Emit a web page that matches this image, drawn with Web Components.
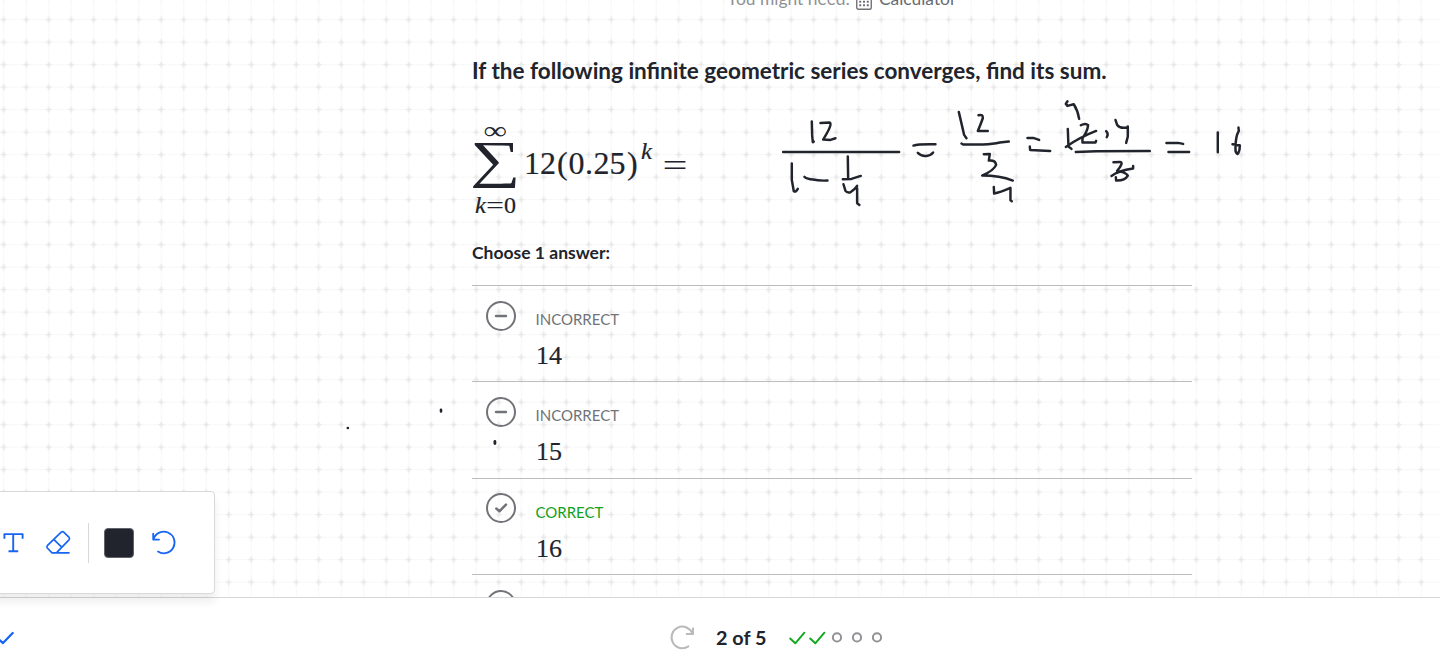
<!DOCTYPE html>
<html lang="en"><head><meta charset="utf-8"><title>Infinite geometric series</title>
<style>html,body{margin:0;height:100%;overflow:hidden;background:#fff}body{font-family:Lato,"Noto Sans",sans-serif;color:#21242c}</style></head>
<body>
<practice-page></practice-page>
<script>
const define=(name,html)=>customElements.define(name,class extends HTMLElement{
  connectedCallback(){ if(!this.shadowRoot){const t=document.createElement('template');t.innerHTML=html;this.attachShadow({mode:'open'}).append(t.content.cloneNode(true));} }
});

define('grid-paper',`<style>:host{position:absolute;inset:0;z-index:0}svg{display:block;width:100%;height:100%}</style>
<svg aria-hidden="true"><defs><pattern id="g" patternUnits="userSpaceOnUse" x="-7.5" y="8.4" width="22.5" height="22.5">
<path d="M11.25 0V22.5M0 11.25H22.5" stroke="#f3f3f3" stroke-width="1.2" stroke-dasharray="1.5 1"/>
<path d="M11.25 8.4V14.1M8.4 11.25H14.1" stroke="#e7e7e7" stroke-width="1.7"/></pattern></defs><rect width="100%" height="100%" fill="url(#g)"/></svg>`);

define('tool-hint',`<style>:host{display:flex;height:20px;align-items:center;color:#8f9196;font-size:17.4px;line-height:20px;white-space:pre;padding-left:255px;margin-top:-11px}
svg{margin:0 7px 0 6px;position:relative;top:2px}.c{color:#6a6c72}</style><span><slot></slot></span><svg width="16" height="18" viewBox="0 0 16 18"><rect x=".75" y=".75" width="14.5" height="16.5" rx="1.5" fill="#fff" stroke="#717378" stroke-width="1.4"/><path d="M3.2 4h9.6M3.2 9.7h9.6M3.2 13.3h9.6" stroke="#717378" stroke-width="2" stroke-dasharray="2 1.8"/></svg><span class="c"><slot name="tool"></slot></span>`);

define('series-formula',`<style>:host{display:block;margin-top:32px;height:104px}svg{display:block;overflow:visible}text{font-family:"Liberation Serif",serif;fill:#21242c}.i{font-style:italic}.b{stroke:#21242c;stroke-width:.2px}</style>
<svg width="230" height="104" viewBox="472 117 230 104">
<text x="483.4" y="139.2" font-size="25" textLength="23.5" lengthAdjust="spacingAndGlyphs">∞</text>
<text transform="translate(470 177.3) scale(1.63 1.62)" font-size="32" textLength="31" lengthAdjust="spacingAndGlyphs">∑</text>
<text class="i b" x="475" y="213" font-size="22.5" textLength="11" lengthAdjust="spacingAndGlyphs">k</text>
<text x="486" y="213" font-size="23" textLength="18" lengthAdjust="spacingAndGlyphs">=</text>
<text class="b" x="504" y="213" font-size="23" textLength="12" lengthAdjust="spacingAndGlyphs">0</text>
<text class="b" y="174" x="524 540 557 568.5 585 593.5 609.5 627" font-size="32">12(0.25)</text>
<text class="i b" x="641" y="159" font-size="22.5" textLength="11" lengthAdjust="spacingAndGlyphs">k</text>
<text x="662.5" y="176" font-size="32" textLength="25" lengthAdjust="spacingAndGlyphs">=</text></svg>`);

define('status-ring',`<style>:host{display:block;width:30px;height:30px}svg{display:block}.check,:host([correct]) .minus{display:none}:host([correct]) .check{display:inline}</style>
<svg width="30" height="30" fill="none" stroke="#717378" stroke-width="2" stroke-linecap="round" stroke-linejoin="round"><circle cx="15" cy="15" r="14"/><path class="minus" stroke-width="2.4" d="M10 15H20"/><path class="check" stroke-width="2.5" d="M10.3 15.5L13.4 18.3L20 11.6"/></svg>`);

define('answer-choice',`<style>:host{display:flex;box-sizing:border-box;height:96.33px;border-top:1px solid #babcbf;padding:15px 0 0 14px;gap:19.5px}:host([correct]){padding-top:14.6px}
.copy{display:flex;flex-direction:column}.s{font-size:15px;line-height:20px;margin-top:7.7px;color:#717378}:host([correct]) .s{color:#13a01a;margin-top:8.6px}.v{font:26px/30px "Liberation Serif",serif;-webkit-text-stroke:.2px #21242c;margin-top:12px;padding-left:.5px}</style>
<status-ring></status-ring><div class="copy"><span class="s"><slot name="status"></slot></span><span class="v"><slot></slot></span></div>`);

define('ink-layer',`<style>:host{position:absolute;inset:0;z-index:2;pointer-events:none}svg{display:block}</style>
<svg width="1440" height="597" fill="none" stroke="#21242c" stroke-linecap="round" stroke-linejoin="round">
<g transform="translate(769.8 89.9) scale(.33333)" stroke-width="7.4">
<path d="M126 95L127 135L129 157L132 155M152 99L180 98Q189 103 160 149L182 150L197 145"/>
<path d="M40 186H388M66 221V270L72 304Q78 308 84 297M104 261Q112 268 130 269Q145 273 173 272M234 200L235 263M219 268L245 267L273 258"/>
<path d="M221 283L227 303Q232 310 242 307Q256 298 262 288M262 295V340L269 345"/>
<path d="M431 167Q445 162 497 163M444 189Q455 200 470 198Q482 198 490 188"/>
<path d="M567 66L583 135L590 145M626 76Q640 72 639 85Q630 110 624 123H654M575 161L580 164H640Q670 163 690 158L717 155"/>
<path d="M642 193L660 192L657 212Q677 210 679 225Q672 242 637 257Q690 257 729 272M672 291L673 311Q690 308 722 294L722 331L726 334"/></g>
<g transform="translate(999.8 89.9) scale(.33333)" stroke-width="7.4">
<path d="M203 34L198 42L203 48L222 43Q234 62 238 87M204 117L206 170L215 177M198 171Q240 142 289 123M243 106Q257 98 265 106Q263 125 248 145V158H287L289 153"/>
<path d="M319 124Q327 132 321 142M347 90L352 105Q362 118 384 112M384 110V140L379 159M228 186L290 184L450 183"/>
<path d="M341 217L361 216Q373 218 352 243Q378 247 384 257Q375 273 349 272L348 262M335 258Q355 243 400 236V228"/>
<path d="M83 144H100L118 150M90 170L91 180L151 183M500 159H535L550 162M506 186H568M654 128V187M716 113L717 123Q707 140 707 175Q706 188 713 192Q720 187 720 166L698 163"/></g>
<path stroke-width="2.6" d="M347.8 428h.1M441 409.8v1.6"/><path stroke-width="2.8" d="M494.9 441.4v2.2"/></svg>`);

define('tool-palette',`<style>:host{position:absolute;left:-20px;top:491px;z-index:4;width:235px;height:102.5px;box-sizing:border-box;border:1px solid #d8d9db;border-radius:4px;background:#fff;box-shadow:0 8px 8px rgba(33,36,44,.08);display:flex;align-items:center;padding:1px 0 0 19.5px}
svg{display:block}.e{margin-left:19.5px}.d{width:1px;height:40px;background:#d6d8da;margin-left:16px}.sw{width:30px;height:30px;border-radius:4px;background:#21242c;margin-left:15px;box-sizing:border-box;border:1px solid #60636a}.u{margin-left:15.5px}</style>
<svg width="24" height="26" fill="none" stroke="#1865f2" stroke-width="1.9"><path d="M3.4 8.8V4.1H21.6V8.8M12.2 4V21.3M7.5 21.3H17.2" stroke-linejoin="round"/></svg>
<svg class="e" width="28" height="26" fill="none" stroke="#1865f2" stroke-width="1.7" stroke-linejoin="round" stroke-linecap="round"><path d="M8 22.8L3.3 18Q2.5 16.8 3.3 15.7L17.2 2.1Q18.5 1.1 19.7 2.1L25.1 7.4Q26 8.6 25 9.8L12.4 22.8ZM10.2 9.8L17.7 17.2M8 22.8H25"/></svg>
<div class="d"></div><div class="sw"></div>
<svg class="u" width="28" height="28" fill="none" stroke="#1865f2" stroke-width="1.8" stroke-linecap="round" stroke-linejoin="round"><path d="M3.2 4.6V10.6H9M3.5 10.1A10.8 10.8 0 1 1 8 22.6"/></svg>`);

define('progress-footer',`<style>:host{position:relative;display:flex;z-index:3;flex:0 0 54.5px;box-sizing:border-box;border-top:1.5px solid #d5d7d9;background:#fff;align-items:center}
svg{display:block}.left{width:16px}.mid{display:flex;align-items:center;margin-left:652px;padding-top:24.8px;height:0}.n{font-size:19.8px;font-weight:700;line-height:24px;width:72px;margin-left:20px;position:relative;top:-.3px}</style>
<svg class="left" width="16" height="54" fill="none" stroke="#1865f2" stroke-width="2.3" stroke-linecap="round" stroke-linejoin="round"><path d="M-3 40L3 45L12.7 35"/></svg>
<div class="mid"><svg width="28" height="28" fill="none" stroke="#b8babc" stroke-width="2" stroke-linecap="round" stroke-linejoin="round"><path d="M25 5.3V11H18.7M24.5 10.7A10.8 10.8 0 1 0 20.4 23.4"/></svg><span class="n"><slot></slot></span>
<svg width="100" height="24" fill="none" stroke-linecap="round" stroke-linejoin="round"><path d="M2.2 13.5L7.3 18.3L16.4 7.7M22.2 13.5L27.3 18.3L36.4 7.7" stroke="#13a920" stroke-width="2"/><g stroke="#919296" stroke-width="2"><circle cx="49" cy="12.4" r="4.1"/><circle cx="69" cy="12.4" r="4.1"/><circle cx="89" cy="12.4" r="4.1"/></g></svg></div>`);

define('practice-page',`<style>:host{position:relative;display:flex;flex-direction:column;height:652px;overflow:hidden}
main{flex:1;min-height:0;position:relative;overflow:hidden;padding-left:472px}.content{position:relative;z-index:1;width:720px}
h1{font-size:22.5px;line-height:28px;margin:48px 0 0;font-weight:700;white-space:nowrap}h2{font-size:17.5px;line-height:24px;margin:20.2px 0 19.8px;font-weight:700}</style>
<main><grid-paper></grid-paper><div class="content"><tool-hint>You might need:<span slot="tool">Calculator</span></tool-hint>
<h1>If the following infinite geometric series converges, find its sum.</h1><series-formula></series-formula><h2>Choose 1 answer:</h2>
<answer-choice><span slot="status">INCORRECT</span>14</answer-choice><answer-choice><span slot="status">INCORRECT</span>15</answer-choice><answer-choice correct><span slot="status">CORRECT</span>16</answer-choice><answer-choice></answer-choice></div><ink-layer></ink-layer></main>
<progress-footer>2 of 5</progress-footer><tool-palette></tool-palette>`);

// Pass the result state of each choice on to its ring.
document.querySelector('practice-page').shadowRoot.querySelectorAll('answer-choice').forEach(a=>a.shadowRoot.querySelector('status-ring').toggleAttribute('correct',a.hasAttribute('correct')));
</script></body></html>
